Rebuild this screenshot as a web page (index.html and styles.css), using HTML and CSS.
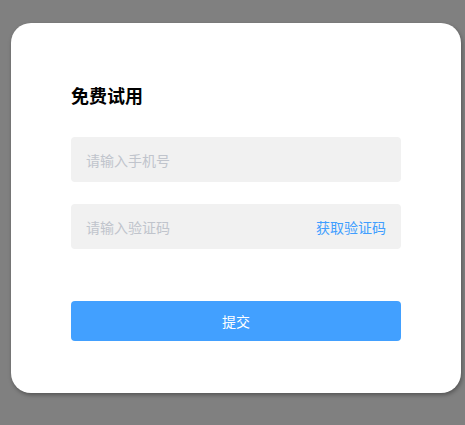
FILE: index.html
```html
<!DOCTYPE html>
<html lang="zh-CN">
<head>
<meta charset="utf-8">
<title>免费试用</title>
<link rel="stylesheet" href="styles.css">
</head>
<body>
<div class="card">
  <h2 class="title">免费试用</h2>
  <div class="field">
    <input class="input" type="text" placeholder="请输入手机号">
  </div>
  <div class="field">
    <input class="input" type="text" placeholder="请输入验证码">
    <span class="code-link">获取验证码</span>
  </div>
  <button class="submit" type="button">提交</button>
</div>
</body>
</html>
```

FILE: styles.css
```css
html, body {
  margin: 0;
  padding: 0;
  background: #808080;
  height: 100%;
}
body {
  padding: 23px 0 0 11px;
  box-sizing: border-box;
  font-family: "Noto Sans CJK SC", "Noto Sans", sans-serif;
}
.card {
  width: 450px;
  height: 370px;
  box-sizing: border-box;
  background: #fff;
  border-radius: 20px;
  box-shadow: 1px 2px 4px rgba(0, 0, 0, 0.35);
  padding: 60px 60px 0 60px;
  display: flex;
  flex-direction: column;
}
.title {
  margin: 0 0 29px 0;
  font-size: 18px;
  line-height: 25px;
  font-weight: bold;
  color: #000;
}
.field {
  height: 45px;
  background: #f1f1f1;
  border-radius: 4px;
  display: flex;
  align-items: center;
  padding: 0 15px;
  margin-bottom: 22px;
}
.field + .field {
  margin-bottom: 52px;
}
.input {
  flex: 1;
  min-width: 0;
  border: none;
  outline: none;
  background: transparent;
  padding: 0;
  font-family: inherit;
  font-size: 14px;
  color: #333;
}
.input::placeholder {
  color: #c0c4cc;
}
.code-link {
  font-size: 14px;
  color: #409eff;
}
.submit {
  height: 40px;
  border: none;
  border-radius: 4px;
  background: #42a0ff;
  color: #fff;
  font-family: inherit;
  font-size: 14px;
  padding: 0;
}
```
